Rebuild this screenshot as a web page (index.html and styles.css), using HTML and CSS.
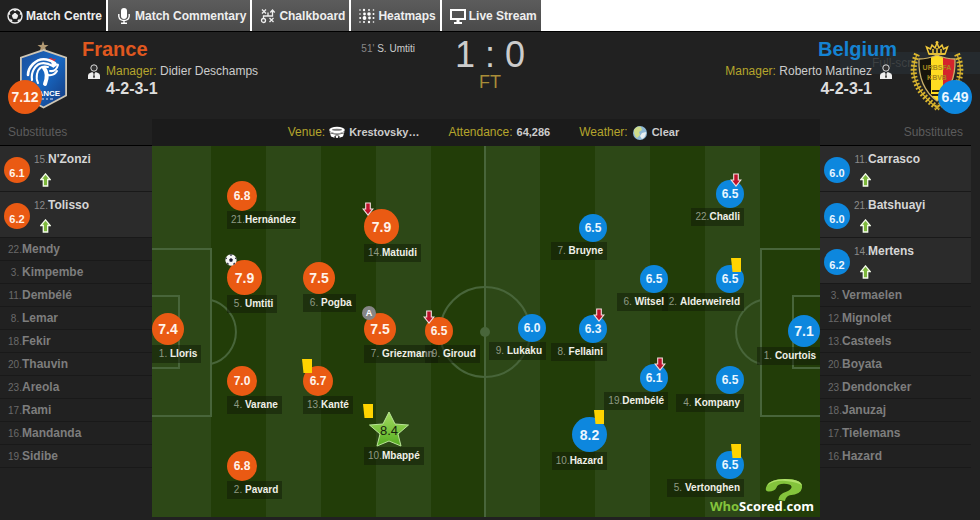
FILE: index.html
```html
<!DOCTYPE html>
<html lang="en">
<head>
    <meta charset="UTF-8">
    <meta name="viewport" content="width=device-width, initial-scale=1.0">
    <title>France 1 : 0 Belgium - Match Centre</title>
    <link rel="stylesheet" href="styles.css">
</head>
<body>
    <!-- shared icons -->
    <svg class="sprite" aria-hidden="true">
        <symbol id="icon-manager" viewBox="0 0 12 15">
            <circle cx="6" cy="4" r="3.2" fill="#333" stroke="#ddd" stroke-width="1"/>
            <path d="M0 15v-3.5Q0 9.500 2.500 8.800L4.300 8 6 10l1.700-2 1.800.8Q12 9.500 12 11.500V15z" fill="#eee"/>
            <path d="M5.300 9.500h1.400l-.3 1.300.6 2.200-1 1.200-1-1.200.6-2.200z" fill="#333"/>
        </symbol>
        <symbol id="icon-in" viewBox="0 0 11 14">
            <path d="M5.500.900 10.200 6.500H7.700V13H3.300V6.500H.8z" fill="#7db83c" stroke="#f4fbe9" stroke-width="1.300"/>
        </symbol>
        <symbol id="icon-out" viewBox="0 0 11 14">
            <path d="M3.200 1h4.600v6h2.500L5.500 13 .7 7h2.500z" fill="#c0122c" stroke="#f3dfe0" stroke-width="1.100"/>
        </symbol>
        <symbol id="icon-card" viewBox="0 0 11 14">
            <path d="M.5 0h10v14H2z" fill="#ffd400"/>
        </symbol>
        <symbol id="icon-goal" viewBox="0 0 14 14">
            <circle cx="7" cy="7" r="6.600" fill="#f5f5f5"/>
            <path d="M7 4.800 9.200 6.400 8.400 9H5.600L4.800 6.400zM5 .7h4L7 2.200zM.5 6.300 1.200 3.800 2.500 5.200zM13.500 6.300l-.7-2.500-1.300 1.400zM2.400 11.600 2.800 9.800l1.500 1.400-.3 1.700zM11.600 11.600 11.200 9.800l-1.500 1.400.3 1.700z" fill="#16162a"/>
        </symbol>
    </svg>

    <nav class="tabs">
        <a class="tab active" href="#centre">
            <svg class="tab-icon" viewBox="0 0 16 16" fill="none" stroke="#eee">
                <circle cx="8" cy="8" r="7" stroke-width="1.400"/>
                <path d="M8 5.200 10.700 7.200 9.700 10.300H6.300L5.300 7.200z" fill="#eee"/>
                <path d="M5.500 1.500h5L8 3.600zM1 7 2.200 4l1.300 2.500zM15 7l-1.200-3-1.300 2.500zM3 12.500l.6-1.700 1.800 1.500-.3 1.700zM13 12.500l-.6-1.700-1.800 1.500.3 1.700z" fill="#eee" stroke="none"/>
            </svg>
            Match Centre
        </a>
        <a class="tab" href="#commentary">
            <svg class="tab-icon" viewBox="0 0 16 16" fill="none" stroke="#fff">
                <rect x="5" y="0" width="6" height="11" rx="3" fill="#fff" stroke="none"/>
                <path d="M2.800 6v2.500Q3.500 12.500 8 12.500T13.200 8.500V6M8 12.500V15M5 15.200h6" stroke-width="1.400"/>
            </svg>
            Match Commentary
        </a>
        <a class="tab" href="#chalkboard">
            <svg class="tab-icon" viewBox="0 0 16 16" fill="none" stroke="#eee" stroke-width="1.300">
                <path d="M2 1.500l4 4M6 1.500l-4 4M9.500 10l4 4M13.500 10l-4 4"/>
                <circle cx="3.500" cy="12.500" r="2"/>
                <path d="M3.500 10.500V8H12.500V2.500M10.300 4.500l2.200-2.500 2.200 2.500M8 4.500V8"/>
            </svg>
            Chalkboard
        </a>
        <a class="tab" href="#heatmaps">
            <svg class="tab-icon" viewBox="0 0 16 16" fill="#fff">
                <circle cx="1" cy="2" r=".8"/><circle cx="5" cy="2" r="1.200"/><circle cx="10" cy="2" r=".9"/><circle cx="14.500" cy="2" r=".8"/>
                <circle cx="1" cy="6" r=".8"/><circle cx="5.500" cy="6" r="1.400"/><circle cx="10" cy="6" r="1.800"/><circle cx="14.500" cy="6" r="1"/>
                <circle cx="1.200" cy="10" r="1"/><circle cx="5.500" cy="10" r="1.900"/><circle cx="10.500" cy="10" r="1.400"/><circle cx="14.500" cy="10" r="1"/>
                <circle cx="1" cy="14" r=".8"/><circle cx="5" cy="14" r="1"/><circle cx="10" cy="14" r="1.200"/><circle cx="14.500" cy="14" r=".8"/>
            </svg>
            Heatmaps
        </a>
        <a class="tab" href="#stream">
            <svg class="tab-icon" viewBox="0 0 16 16" fill="#fff">
                <path d="M0 1h16v11H0zM2 3v7h12V3z" fill-rule="evenodd"/>
                <path d="M6.500 12h3v2H12v2H4v-2h2.500z"/>
            </svg>
            Live Stream
        </a>
    </nav>

    <header class="match-header">
        <div class="team home">
            <div class="crest">
                <svg class="crest-home" viewBox="0 0 48 68">
                    <defs>
                        <linearGradient id="crestBlue" x1="0" y1="0" x2="1" y2="1">
                            <stop offset="0" stop-color="#1c4f9c"/>
                            <stop offset=".5" stop-color="#1769c4"/>
                            <stop offset="1" stop-color="#15387c"/>
                        </linearGradient>
                    </defs>
                    <path d="M23 0l1.400 4 4.100.1-3.300 2.500 1.200 4L23 8.300l-3.400 2.300 1.200-4-3.300-2.500 4.100-.1z" fill="#b39a73"/>
                    <path d="M23.500 8 47 16v39L23.500 67.500 0 55V16z" fill="#cfc6b4"/>
                    <path d="M23.500 10 45.200 17.300v36.600L23.500 65.500 1.800 53.900V17.300z" fill="url(#crestBlue)"/>
                    <path d="M28 20q1-4 4-3l1 1.500 3-1-2 4z" fill="#d4303c"/>
                    <g fill="none" stroke="#fff" stroke-linecap="round">
                        <path d="M35 22Q22 14 13 23Q8 28 8 34" stroke-width="2.600"/>
                        <path d="M33 25Q20 18 14 28Q11 33 12 39" stroke-width="2.200"/>
                        <path d="M28 26Q19 24 17 33Q16 38 18 42" stroke-width="2"/>
                        <path d="M24 27Q29 33 25 43" stroke-width="4"/>
                        <path d="M30 30Q36 31 38 24M28 34Q34 35 37 30" stroke-width="2"/>
                    </g>
                    <path d="M31 21l8 2-6 4z" fill="#fff"/>
                    <text x="23.500" y="55" text-anchor="middle" font-size="8" font-weight="700" fill="#fff">FRANCE</text>
                    <path d="M21 58h3M26 58h2M30 58h3" stroke="#dfe6f5"/>
                </svg>
                <span class="rating team-rating">7.12</span>
            </div>
            <div class="team-info">
                <h2 class="team-name">France</h2>
                <p class="manager">
                    <svg class="manager-icon"><use href="#icon-manager"/></svg>
                    <span><span class="label">Manager:</span> Didier Deschamps</span>
                </p>
                <p class="formation">4-2-3-1</p>
            </div>
            <p class="scorers"><span class="minute">51'</span> S. Umtiti</p>
        </div>

        <div class="result">
            <div class="score">1 : 0</div>
            <div class="status">FT</div>
        </div>

        <div class="team away">
            <span class="fullscreen-hint">Full-screen</span>
            <div class="team-info">
                <h2 class="team-name">Belgium</h2>
                <p class="manager">
                    <span><span class="label">Manager:</span> Roberto Martínez</span>
                    <svg class="manager-icon"><use href="#icon-manager"/></svg>
                </p>
                <p class="formation">4-2-3-1</p>
            </div>
            <div class="crest">
                <svg class="crest-away" viewBox="0 0 56 70">
                    <defs>
                        <clipPath id="shield"><path d="M10 18q9 0 18-4 9 4 18 4 1 28-18 42Q9 46 10 18z"/></clipPath>
                    </defs>
                    <g fill="none" stroke="#d8b42e">
                        <path d="M8 13Q-4 42 27 66M48 13Q60 42 29 66" stroke-width="1.200"/>
                        <path d="M8 13Q-4 42 27 66M48 13Q60 42 29 66" stroke-width="6" stroke-dasharray="1.800 2"/>
                        <path d="M26 64l4 5M30 64l-4 5" stroke-width="1.300"/>
                    </g>
                    <g clip-path="url(#shield)">
                        <path d="M0 10h22v55H0z" fill="#16140c"/>
                        <path d="M22 10h12v55H22z" fill="#ffdc22"/>
                        <path d="M34 10h22v55H34z" fill="#d4242c"/>
                        <path d="M23 50h10M22 54h12" stroke="#2a2410" stroke-width="2"/>
                    </g>
                    <path d="M10 18q9 0 18-4 9 4 18 4 1 28-18 42Q9 46 10 18z" fill="none" stroke="#c9b06a" stroke-width="1.300"/>
                    <text x="28" y="29" text-anchor="middle" font-size="7" font-weight="700" fill="#a88a1e">URBSFA</text>
                    <text x="28" y="39" text-anchor="middle" font-size="7" font-weight="700" fill="#a88a1e">KBVB</text>
                    <path d="M20 13 17.500 6l4 2 1.500-4 3 3 2-5 2 5 3-3 1.500 4 4-2L36 13z" fill="none" stroke="#f0c83a" stroke-width="1.500"/>
                    <path d="M20 13h16M28 0v4M26.500 1.500h3M24 8v4M28 7v5M32 8v4" stroke="#f0c83a" stroke-width="1.500"/>
                </svg>
                <span class="rating team-rating">6.49</span>
            </div>
        </div>
    </header>

    <main class="match-body">
        <h3 class="subs-title">Substitutes</h3>
        <div class="match-info">
            <div class="info-item">
                <span class="label">Venue:</span>
                <svg class="info-icon" viewBox="0 0 16 16">
                    <ellipse cx="8" cy="5" rx="7.800" ry="3.200" fill="#fff"/>
                    <ellipse cx="8" cy="4.800" rx="5" ry="1" fill="#777"/>
                    <path d="M.5 6.500Q8 10.500 15.500 6.500L14 11.500l-3.500 1.300V11q-2.500-1.300-5 0v1.800L2 11.500z" fill="#fff"/>
                    <path d="M1 8Q8 11 15 8" fill="none" stroke="#444" stroke-width=".8"/>
                    <circle cx="8" cy="11.800" r="1.300" fill="#fff"/>
                </svg>
                <span class="info-value">Krestovsky…</span>
            </div>
            <div class="info-item">
                <span class="label">Attendance:</span>
                <span class="info-value">64,286</span>
            </div>
            <div class="info-item">
                <span class="label">Weather:</span>
                <svg class="info-icon" viewBox="0 0 16 16">
                    <circle cx="8" cy="8" r="7" fill="#8fb9d6"/>
                    <path d="M2 5q3-5 7-3l1 3-3 2 1 3-3 3Q2 11 2 5z" fill="#cfdc8a"/>
                    <path d="M10 8l4-1q0 5-4 7l-2-3z" fill="#e9f0f2"/>
                </svg>
                <span class="info-value">Clear</span>
            </div>
        </div>
        <h3 class="subs-title away">Substitutes</h3>

        <ul class="subs home" id="homeSubs"></ul>

        <section class="pitch">
            <svg class="pitch-lines" viewBox="0 0 668 371" preserveAspectRatio="none">
                <path d="M0 0h668v371H0z" fill="#2d4817"/>
                <path d="M59 0h55v371H59zM169 0h55v371h-55zM279 0h54v371h-54zM388 0h55v371h-55zM498 0h55v371h-55zM608 0h60v371h-60z" fill="#223d08"/>
                <g fill="none" stroke="#48653a" stroke-width="2">
                    <path d="M333 0v371"/>
                    <circle cx="333" cy="186" r="45"/>
                    <path d="M0 103h59v167H0M0 150h27v72H0M59 154A33 33 0 0 1 59 218"/>
                    <path d="M668 103h-59v167h59M668 150h-27v72h27M609 154A33 33 0 0 0 609 218"/>
                </g>
                <circle cx="333" cy="186" r="5" fill="#48653a"/>
            </svg>
            <div id="players"></div>
            <div class="brand">
                <svg class="brand-mark" viewBox="0 0 40 24">
                    <path d="M1 9Q4 0 21 0q19 0 18 9-1 7-13 8-4 1-5 6l-7-1q0-6 9-9 5-2 5-5-1-3-8-3-7 0-8 4-2 4-8 4Q0 13 1 9z" fill="#84c43c"/>
                    <path d="M2 7Q6 0 21 0q16 0 18 7-4-4-17-5T2 7z" fill="#b0e06a"/>
                </svg>
                <span class="brand-name"><span class="green">Who</span>Scored<span class="green">.</span>com</span>
            </div>
        </section>

        <ul class="subs away" id="awaySubs"></ul>
    </main>

    <script>
        // pitch units for x / y, away players are anchored on their right edge
        const PITCH = { width: 668, height: 371 };

        const players = [
            { team: 'home', no: 1, name: 'Lloris', rating: '7.4', size: 'lg', x: 0, y: 167 },
            { team: 'home', no: 21, name: 'Hernández', rating: '6.8', size: 'md', x: 75, y: 35 },
            { team: 'home', no: 5, name: 'Umtiti', rating: '7.9', size: 'xl', x: 75, y: 114, event: 'goal' },
            { team: 'home', no: 4, name: 'Varane', rating: '7.0', size: 'md', x: 75, y: 220 },
            { team: 'home', no: 2, name: 'Pavard', rating: '6.8', size: 'md', x: 75, y: 305 },
            { team: 'home', no: 6, name: 'Pogba', rating: '7.5', size: 'lg', x: 151, y: 116 },
            { team: 'home', no: 13, name: 'Kanté', rating: '6.7', size: 'md', x: 151, y: 220, event: 'card' },
            { team: 'home', no: 14, name: 'Matuidi', rating: '7.9', size: 'xl', x: 212, y: 63, event: 'out' },
            { team: 'home', no: 7, name: 'Griezmann', rating: '7.5', size: 'lg', x: 212, y: 167, event: 'assist' },
            { team: 'home', no: 10, name: 'Mbappé', rating: '8.4', size: 'star', x: 212, y: 265, event: 'card' },
            { team: 'home', no: 9, name: 'Giroud', rating: '6.5', size: 'sm', x: 273, y: 171, event: 'out' },
            { team: 'away', no: 1, name: 'Courtois', rating: '7.1', size: 'lg', x: 668, y: 169 },
            { team: 'away', no: 22, name: 'Chadli', rating: '6.5', size: 'sm', x: 592, y: 34, event: 'out' },
            { team: 'away', no: 2, name: 'Alderweireld', rating: '6.5', size: 'sm', x: 592, y: 119, event: 'card' },
            { team: 'away', no: 4, name: 'Kompany', rating: '6.5', size: 'sm', x: 592, y: 220 },
            { team: 'away', no: 5, name: 'Vertonghen', rating: '6.5', size: 'sm', x: 592, y: 305, event: 'card' },
            { team: 'away', no: 6, name: 'Witsel', rating: '6.5', size: 'sm', x: 516, y: 119 },
            { team: 'away', no: 19, name: 'Dembélé', rating: '6.1', size: 'sm', x: 516, y: 218, event: 'out' },
            { team: 'away', no: 7, name: 'Bruyne', rating: '6.5', size: 'sm', x: 455, y: 68 },
            { team: 'away', no: 8, name: 'Fellaini', rating: '6.3', size: 'sm', x: 455, y: 169, event: 'out' },
            { team: 'away', no: 10, name: 'Hazard', rating: '8.2', size: 'xl', x: 455, y: 271, event: 'card' },
            { team: 'away', no: 9, name: 'Lukaku', rating: '6.0', size: 'sm', x: 394, y: 168 }
        ];

        const homeSubs = [
            [15, "N'Zonzi", '6.1'], [12, 'Tolisso', '6.2'], [22, 'Mendy'], [3, 'Kimpembe'],
            [11, 'Dembélé'], [8, 'Lemar'], [18, 'Fekir'], [20, 'Thauvin'], [23, 'Areola'],
            [17, 'Rami'], [16, 'Mandanda'], [19, 'Sidibe']
        ];
        const awaySubs = [
            [11, 'Carrasco', '6.0'], [21, 'Batshuayi', '6.0'], [14, 'Mertens', '6.2'],
            [3, 'Vermaelen'], [12, 'Mignolet'], [13, 'Casteels'], [20, 'Boyata'],
            [23, 'Dendoncker'], [18, 'Januzaj'], [17, 'Tielemans'], [16, 'Hazard']
        ];

        function renderEvent(type) {
            if (!type) return '';
            if (type === 'assist') return '<span class="event assist">A</span>';
            return `<svg class="event"><use href="#icon-${type}"/></svg>`;
        }

        function renderPlayers() {
            document.getElementById('players').innerHTML = players.map(p => {
                const side = p.team === 'home' ? 'left' : 'right';
                const x = p.team === 'home' ? p.x : PITCH.width - p.x;
                const star = p.size === 'star' ? `
                    <svg class="star" viewBox="0 0 40 36">
                        <defs><linearGradient id="starFill" x1="0" y1="0" x2="0" y2="1">
                            <stop offset="0" stop-color="#a5dc62"/><stop offset="1" stop-color="#55ad20"/>
                        </linearGradient></defs>
                        <path d="M20 1l6 12 13.500 1-10.500 9 3 12-12-5-12 5 3-12L.5 14 14 13z" fill="url(#starFill)" stroke="#b9e596"/>
                    </svg>` : '';
                return `
                <div class="player ${p.team}" style="${side}: ${x / PITCH.width * 100}%; top: ${p.y / PITCH.height * 100}%">
                    <span class="rating ${p.size}">${star}<span class="rating-value">${p.rating}</span></span>
                    ${renderEvent(p.event)}
                    <span class="player-label"><span class="number">${p.no}.</span>${p.name}</span>
                </div>`;
            }).join('');
        }

        function renderSubs(id, subs) {
            document.getElementById(id).innerHTML = subs.map(([no, name, rating]) => rating ? `
                <li class="sub played">
                    <span class="rating"><span class="rating-value">${rating}</span></span>
                    <div>
                        <div class="sub-name"><span class="number">${no}.</span>${name}</div>
                        <svg class="sub-in"><use href="#icon-in"/></svg>
                    </div>
                </li>` : `
                <li class="sub"><span class="number">${no}.</span>${name}</li>`
            ).join('');
        }

        renderPlayers();
        renderSubs('homeSubs', homeSubs);
        renderSubs('awaySubs', awaySubs);
    </script>
</body>
</html>
```

FILE: styles.css
```css
* {
    margin: 0;
    padding: 0;
    box-sizing: border-box;
}

body {
    background: #212121;
    color: #ccc;
    font-family: "Liberation Sans", Arial, sans-serif;
    font-size: 12px;
}

ul {
    list-style: none;
}

.sprite {
    position: absolute;
    width: 0;
    height: 0;
}

.label {
    color: #b5a52c;
}

/* tabs */
.tabs {
    display: flex;
    gap: 2px;
    background: #fff;
}

.tab {
    display: flex;
    align-items: center;
    gap: 3px;
    height: 31px;
    padding: 0 4px 0 8px;
    background: linear-gradient(#5c5c5c, #4a4a4a);
    color: #eee;
    font-weight: bold;
    text-decoration: none;
    white-space: nowrap;
}

.tab.active {
    background: #212121;
    padding-left: 7px;
}

.tab-icon {
    width: 16px;
    height: 16px;
}

/* match header */
.match-header {
    display: grid;
    grid-template-columns: 1fr auto 1fr;
    min-height: 88px;
    padding-top: 5px;
    border-top: 1px solid #000;
}

.team {
    display: flex;
    position: relative;
}

.team.home {
    padding-left: 20px;
}

.team.away {
    justify-content: flex-end;
    padding-right: 15px;
    text-align: right;
}

.crest {
    position: relative;
    padding-top: 4px;
}

.crest svg {
    display: block;
}

.crest-home {
    width: 48px;
    height: 68px;
}

.crest-away {
    width: 56px;
    height: 70px;
}

.team-info {
    position: relative;
    padding: 0 14px;
}

.team.away .team-info {
    padding: 0 12px;
}

.team-name {
    font-size: 20px;
    line-height: 24px;
    color: #e0581f;
}

.away .team-name {
    color: #1583d2;
}

.manager {
    display: flex;
    gap: 6px;
    align-items: center;
    padding-left: 6px;
    line-height: 20px;
    white-space: nowrap;
}

.away .manager {
    gap: 8px;
    padding: 0 5px 0 0;
}

.manager-icon {
    width: 12px;
    height: 15px;
}

.formation {
    padding-left: 24px;
    font-size: 16px;
    font-weight: bold;
    line-height: 16px;
    color: #ddd;
}

.away .formation {
    padding: 0 25px 0 0;
}

.scorers {
    margin: 5px 40px 0 auto;
    font-size: 10px;
    line-height: 14px;
}

.minute {
    color: #888;
}

.result {
    text-align: center;
}

.score {
    font-size: 36px;
    line-height: 36px;
    color: #ccc;
}

.status {
    font-size: 18px;
    line-height: 18px;
    color: #a88d38;
}

.fullscreen-hint {
    position: absolute;
    top: 15px;
    right: 0;
    width: 140px;
    padding-left: 32px;
    background: #252a2e;
    color: #3e4143;
    line-height: 22px;
    text-align: left;
}

.rating {
    display: flex;
    align-items: center;
    justify-content: center;
    border-radius: 50%;
    background: #ea5a13;
    color: #fff3ea;
    font-size: 12px;
    font-weight: bold;
    line-height: 14px;
}

.away .rating {
    background: #0d87de;
    color: #eaf6ff;
}

.team-rating {
    position: absolute;
    top: 43px;
    left: -12px;
    width: 34px;
    height: 34px;
    font-size: 14px;
}

.away .team-rating {
    left: auto;
    right: -7px;
}

/* substitutes, info bar and pitch */
.match-body {
    display: grid;
    grid-template-columns: 152px 1fr 151px;
    padding-right: 9px;
}

.subs-title {
    padding: 0 8px;
    border-bottom: 1px solid #000;
    color: #5c5c5c;
    font-size: 12px;
    font-weight: normal;
    line-height: 26px;
}

.subs-title.away {
    text-align: right;
}

.match-info {
    display: flex;
    justify-content: center;
    gap: 29px;
    padding-right: 5px;
    background: #1b1b1b;
    line-height: 27px;
}

.info-item {
    display: flex;
    align-items: center;
    gap: 4px;
}

.info-icon {
    width: 16px;
    height: 16px;
}

.info-value {
    font-size: 11px;
    font-weight: bold;
}

.number {
    display: inline-block;
    width: 14px;
    color: #6a6a6a;
    font-size: 10px;
    font-weight: normal;
    text-align: center;
    white-space: nowrap;
}

.sub {
    height: 23px;
    padding-left: 8px;
    border-bottom: 1px solid #191919;
    color: #7d7d7d;
    font-weight: bold;
    line-height: 22px;
}

.sub.played {
    display: flex;
    gap: 4px;
    height: 46px;
    padding-left: 4px;
    background: #2b2b2b;
    color: #d6d6d6;
}

.sub.played .rating {
    width: 26px;
    height: 26px;
    margin-top: 11px;
    padding-top: 5px;
    font-size: 11px;
}

.sub-name {
    line-height: 26px;
}

.sub.played .number {
    color: #8a8a8a;
}

.sub-in {
    display: block;
    width: 11px;
    height: 14px;
    margin-left: 6px;
}

.pitch {
    position: relative;
    aspect-ratio: 668 / 371;
    overflow: hidden;
}

.pitch-lines {
    display: block;
    width: 100%;
    height: 100%;
}

.player {
    position: absolute;
    display: flex;
    flex-direction: column;
    align-items: flex-start;
}

.player.away {
    align-items: flex-end;
}

.rating.sm {
    width: 28px;
    height: 28px;
}

.rating.md {
    width: 30px;
    height: 30px;
}

.rating.lg {
    width: 32px;
    height: 32px;
    font-size: 14px;
}

.rating.xl {
    width: 35px;
    height: 35px;
    font-size: 14px;
}

.rating.star {
    position: relative;
    width: 40px;
    height: 36px;
    margin-left: 5px;
    padding-top: 3px;
    background: none;
    color: #16240c;
    font-size: 13px;
    font-weight: normal;
}

svg.star {
    position: absolute;
    top: 0;
    left: 0;
    width: 40px;
    height: 36px;
}

.rating-value {
    position: relative;
}

.event {
    position: absolute;
    top: -7px;
    left: -2px;
    width: 12px;
    height: 14px;
}

.event.assist {
    width: 14px;
    border-radius: 50%;
    background: #868686;
    color: #fff;
    font-size: 9px;
    font-weight: bold;
    line-height: 14px;
    text-align: center;
}

.player.away .event {
    left: auto;
    right: 2px;
}

.player-label {
    padding: 0 4px;
    background: rgba(15, 25, 5, 0.5);
    color: #f0f0e8;
    font-size: 10px;
    font-weight: bold;
    line-height: 18px;
    white-space: nowrap;
}

.player-label .number {
    color: #8f9a84;
}

.brand {
    position: absolute;
    right: 6px;
    bottom: 3px;
    display: flex;
    flex-direction: column;
    align-items: center;
}

.brand-mark {
    width: 38px;
    height: 23px;
    margin: 0 0 -4px 44px;
}

.brand-name {
    color: #fff;
    font-family: "Open Sans", sans-serif;
    font-size: 13px;
    font-weight: bold;
    line-height: 16px;
}

.green {
    color: #84c43c;
}
```
